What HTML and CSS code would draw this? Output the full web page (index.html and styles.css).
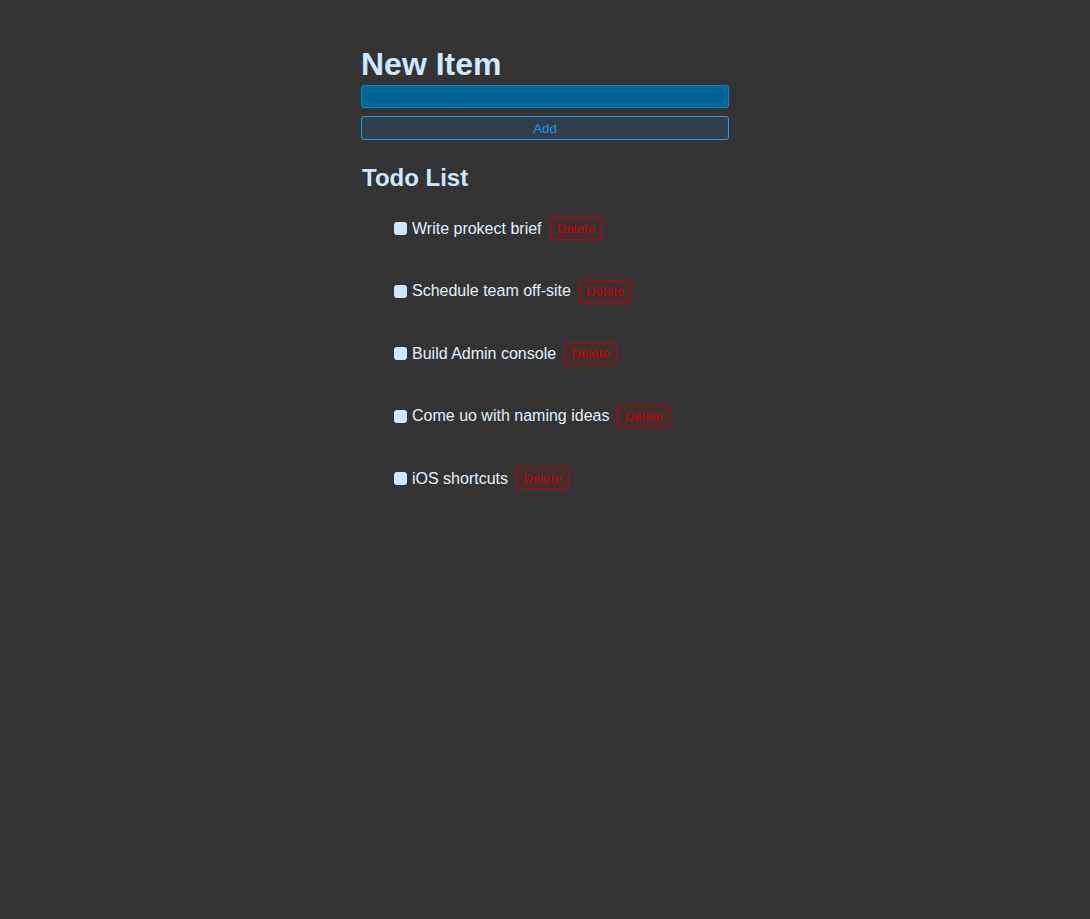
FILE: index.html
```html
<!DOCTYPE html>
<html>
<head>
<meta charset="utf-8">
<link rel="stylesheet" href="styles.css">
</head>
<body>
<div class="app">
  <h1 class="title">New Item</h1>
  <input class="new-input" type="text">
  <button class="add-btn">Add</button>
  <h2 class="subtitle">Todo List</h2>
  <ul class="list">
    <li class="item"><input type="checkbox" class="check"><span class="label">Write prokect brief</span><button class="del">Delete</button></li>
    <li class="item"><input type="checkbox" class="check"><span class="label">Schedule team off-site</span><button class="del">Delete</button></li>
    <li class="item"><input type="checkbox" class="check"><span class="label">Build Admin console</span><button class="del">Delete</button></li>
    <li class="item"><input type="checkbox" class="check"><span class="label">Come uo with naming ideas</span><button class="del">Delete</button></li>
    <li class="item"><input type="checkbox" class="check"><span class="label">iOS shortcuts</span><button class="del">Delete</button></li>
  </ul>
</div>
</body>
</html>
```
FILE: styles.css
```css
html, body {
  margin: 0;
  padding: 0;
  background: #333333;
  height: 100%;
}
body {
  font-family: "Liberation Sans", Arial, sans-serif;
  color: #d6ecff;
}
.app {
  width: 368px;
  margin: 0 auto;
  padding-top: 46px;
  display: flex;
  flex-direction: column;
}
.title {
  font-size: 32px;
  font-weight: bold;
  line-height: 37px;
  margin: 0 0 2px 0;
  color: #cce9ff;
}
.new-input {
  box-sizing: border-box;
  height: 23px;
  width: 100%;
  margin: 0;
  background: #006699;
  border: 1px solid #0a86c4;
  border-radius: 3px;
  color: #ffffff;
  outline: none;
}
.add-btn {
  box-sizing: border-box;
  margin: 8px 0 0 0;
  height: 24px;
  width: 100%;
  background: #2f3e48;
  border: 1px solid #1aa0f0;
  border-radius: 3px;
  color: #1e90ff;
  font-family: "Liberation Sans", Arial, sans-serif;
  font-size: 13.33px;
  padding: 0;
}
.subtitle {
  font-size: 24px;
  font-weight: bold;
  line-height: 28px;
  margin: 24px 0 0 1px;
  color: #cce9ff;
}
.list {
  list-style: none;
  margin: 25px 0 0 0;
  padding: 0 0 0 33px;
}
.item {
  display: flex;
  align-items: center;
  height: 23px;
  margin-bottom: 39.5px;
  font-size: 16px;
  color: #e2f2ff;
}
.check {
  appearance: none;
  -webkit-appearance: none;
  width: 13px;
  height: 13px;
  margin: 0 5px 0 0;
  background: #cce9ff;
  border-radius: 3px;
  border: none;
}
.label {
  line-height: 18px;
}
.del {
  box-sizing: border-box;
  margin-left: 8px;
  height: 23px;
  padding: 0 6px;
  background: #3e2e2e;
  border: 1px solid #c00000;
  border-radius: 2px;
  color: #c80000;
  font-family: "Liberation Sans", Arial, sans-serif;
  font-size: 13.33px;
}
```
